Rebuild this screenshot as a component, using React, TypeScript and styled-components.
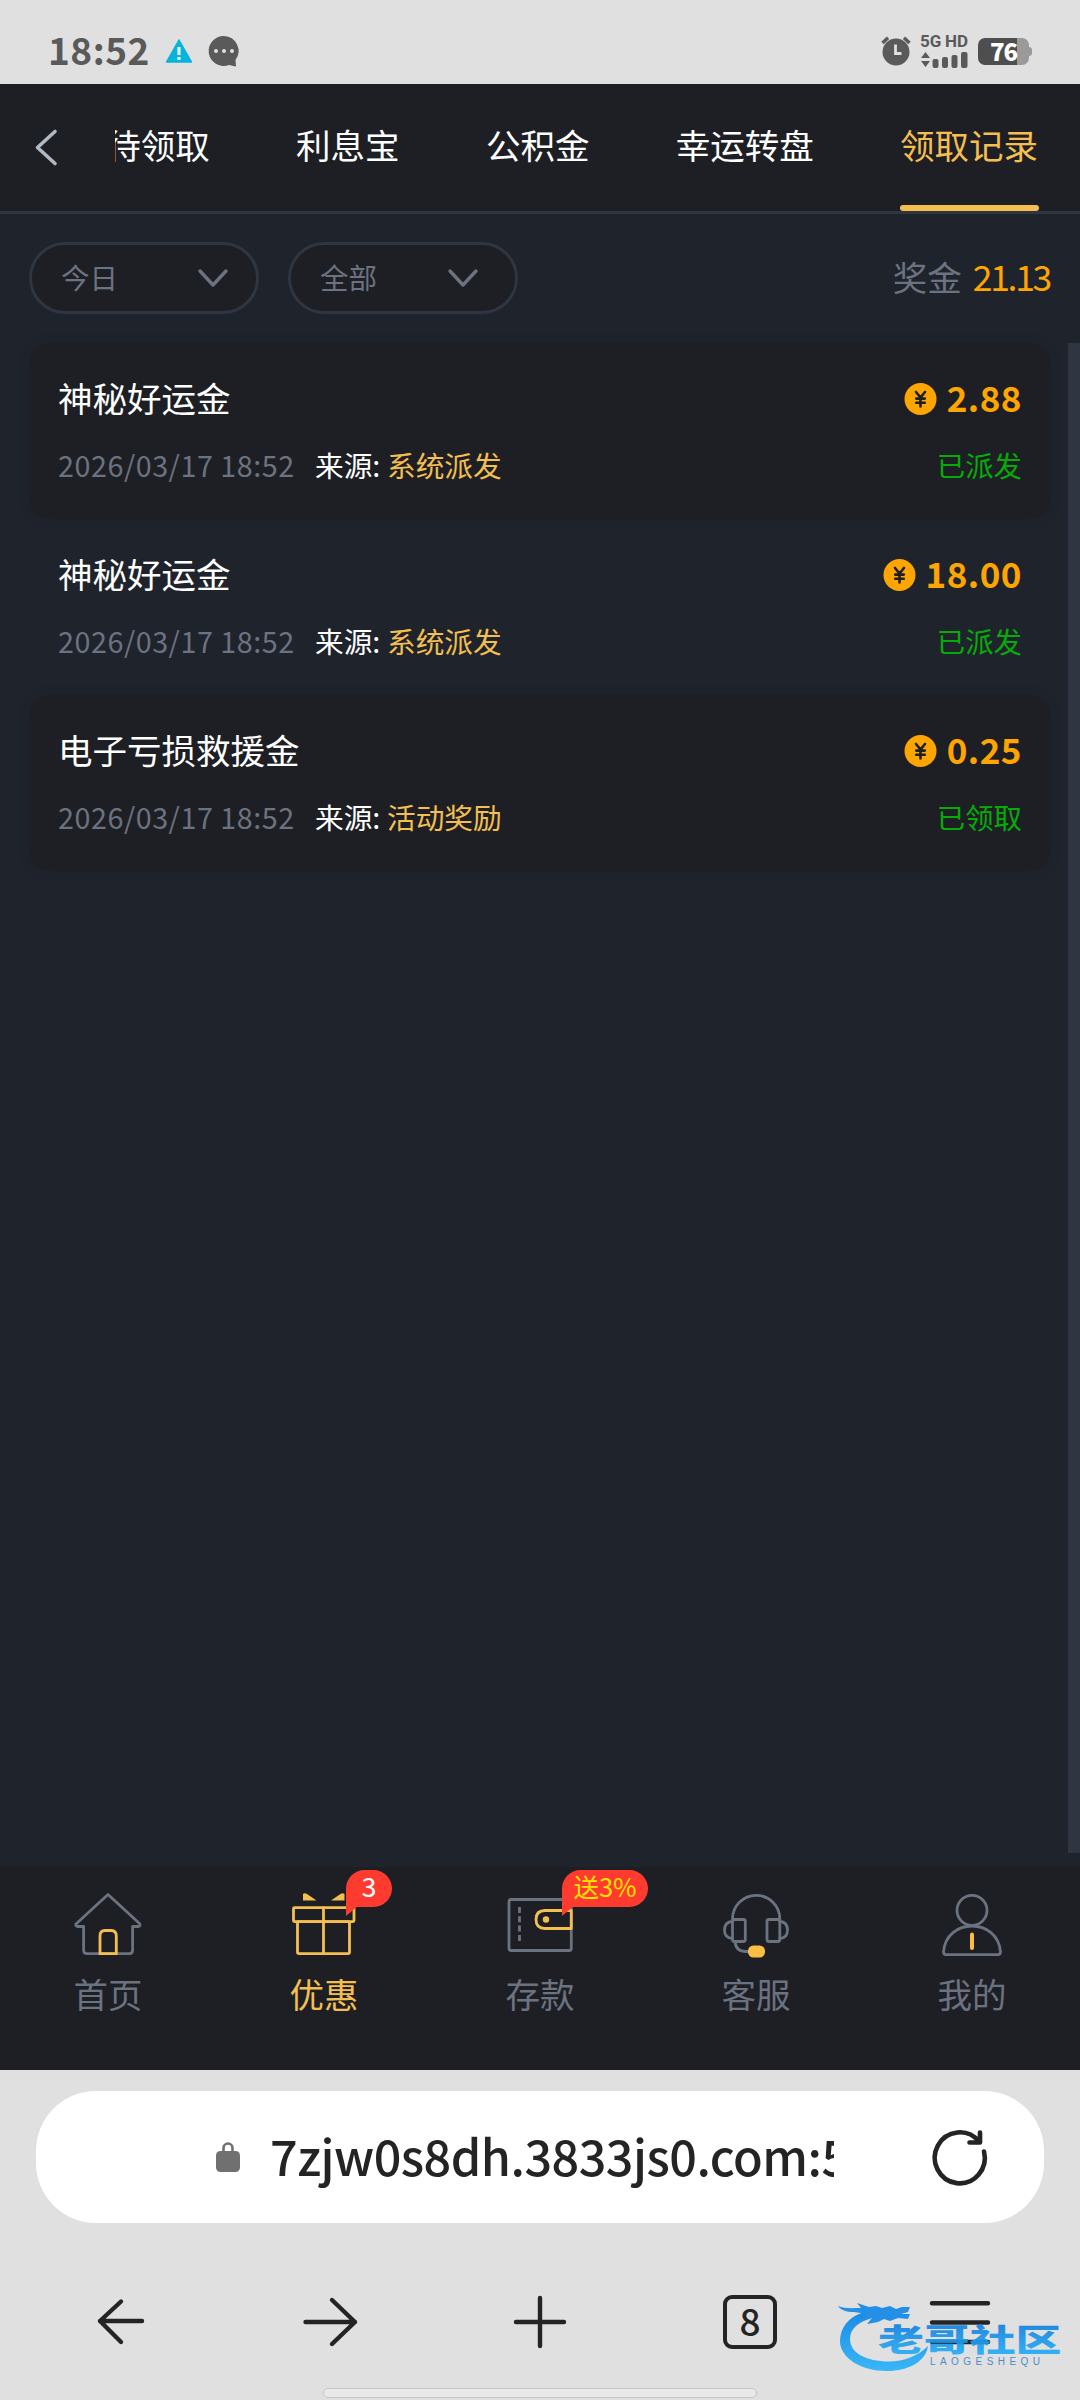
import React from 'react';
import styled, { createGlobalStyle } from 'styled-components';

const GOLD = '#f4bf50';
const MUTED = '#6b7280';
const LINE = '#2f3541';
const PANEL = '#1d1f24';
const PAGE = '#1f232c';
const INK = '#242424';
const STATUS = '#5a5a5a';

const Global = createGlobalStyle`
  * { box-sizing: border-box; }
  html, body { margin: 0; padding: 0; }
  body {
    width: 1080px;
    background: #e0e0e0;
    font-family: "Noto Sans CJK SC", "Noto Sans", sans-serif;
  }
  svg { display: block; flex: none; overflow: visible; }
`;

const Screen = styled.div`
  width: 1080px;
  height: 2400px;
  display: flex;
  flex-direction: column;
  overflow: hidden;
  background: ${PAGE};
`;

const StatusBar = styled.div`
  height: 84px;
  flex: none;
  display: flex;
  align-items: center;
  padding: 17px 51px 0 48px;
  background: #e0e0e0;
  color: ${STATUS};
`;

const Clock = styled.span`
  width: 101px;
  padding-bottom: 3px;
  font-size: 37px;
  font-weight: 700;
  line-height: 40px;
  letter-spacing: 0.5px;
  white-space: nowrap;
`;

const StatusIcon = styled.span<{ $left?: number }>`
  display: flex;
  margin-left: ${(p) => p.$left ?? 0}px;
`;

const Spacer = styled.div`
  flex: 1;
`;

const Network = styled.div`
  width: 48px;
  margin-left: 9px;
  display: flex;
  flex-direction: column;
  gap: 3px;
`;

const NetworkLabel = styled.div`
  display: flex;
  justify-content: space-between;
  height: 14px;
  font: 700 17px/14px Roboto, sans-serif;
`;

const Battery = styled.div`
  position: relative;
  width: 51px;
  height: 27px;
  margin-left: 10px;
  margin-top: 2px;
  display: flex;
  align-items: center;
  justify-content: center;
  border-radius: 7px;
  background: linear-gradient(90deg, #4e4e4e 39px, #9a9a9a 39px);
  color: #fff;
  font: 900 24px/25px "Noto Sans CJK SC", sans-serif;
  letter-spacing: -1px;
  padding-bottom: 2px;

  &::after {
    content: '';
    position: absolute;
    left: 51px;
    top: 9px;
    width: 3px;
    height: 9px;
    border-radius: 0 3px 3px 0;
    background: #9a9a9a;
  }
`;

const Header = styled.header`
  height: 130px;
  flex: none;
  display: flex;
  background: ${PANEL};
  border-bottom: 3px solid ${LINE};
`;

const Back = styled.button`
  width: 115px;
  flex: none;
  display: flex;
  align-items: center;
  padding: 0 0 0 34px;
  border: 0;
  background: none;
`;

const Tabs = styled.nav`
  flex: 1;
  min-width: 0;
  display: flex;
  justify-content: flex-end;
  gap: 86.3px;
  padding-right: 42px;
  overflow: hidden;
`;

const Tab = styled.span<{ $active?: boolean }>`
  flex: none;
  height: 127px;
  display: flex;
  flex-direction: column;
  font-size: 34.5px;
  line-height: 120px;
  white-space: nowrap;
  color: ${(p) => (p.$active ? GOLD : '#fff')};

  &::after {
    content: '';
    height: 6px;
    margin: 1px -1px 0 0;
    border-radius: 3px;
    background: ${(p) => (p.$active ? GOLD : 'transparent')};
  }
`;

const Content = styled.main`
  height: 1653px;
  flex: none;
  display: flex;
  flex-direction: column;
`;

const Filters = styled.div`
  height: 129px;
  flex: none;
  display: flex;
  align-items: center;
  gap: 29px;
  padding: 0 29px 1px;
`;

const Select = styled.div<{ $end: number }>`
  width: 230px;
  height: 72px;
  display: flex;
  align-items: center;
  justify-content: space-between;
  padding: 0 ${(p) => p.$end}px 2px 29px;
  border: 3px solid ${LINE};
  border-radius: 36px;
  background: ${PANEL};
  color: ${MUTED};
  font-size: 28.5px;
  line-height: 40px;
`;

const Bonus = styled.div`
  margin-left: auto;
  display: flex;
  align-items: center;
  gap: 11px;
  padding: 0 1px 5px 0;
  font-size: 34.5px;
  line-height: 48px;
  color: ${MUTED};
`;

const BonusValue = styled.span`
  color: #ffa500;
  font-size: 35.5px;
  letter-spacing: -2.3px;
`;

const ListArea = styled.div`
  flex: 1;
  display: flex;
  justify-content: space-between;
  padding-left: 29px;
`;

const List = styled.div`
  width: 1022px;
`;

const ScrollTrack = styled.div`
  width: 12px;
  height: 1510px;
  background: ${LINE};
`;

const Card = styled.div<{ $filled: boolean }>`
  height: 176px;
  display: flex;
  flex-direction: column;
  padding: 29px 29px 0;
  border-radius: 22px;
  background: ${(p) => (p.$filled ? PANEL : 'transparent')};
  box-shadow: ${(p) => (p.$filled ? '0 0 8px rgba(29, 31, 36, 0.5)' : 'none')};
`;

const Row = styled.div<{ $h: number; $top?: number }>`
  height: ${(p) => p.$h}px;
  margin-top: ${(p) => p.$top ?? 0}px;
  display: flex;
  align-items: center;
  justify-content: space-between;
`;

const Title = styled.span`
  font-size: 34.5px;
  line-height: 50px;
  color: #fff;
`;

const Amount = styled.span`
  display: flex;
  align-items: center;
  gap: 10px;
  font-size: 35px;
  font-weight: 700;
  line-height: 50px;
  letter-spacing: 0.5px;
  color: #ffa500;
`;

const Meta = styled.span`
  display: flex;
  font-size: 28.7px;
  line-height: 40px;
  color: ${MUTED};
`;

const Time = styled.span`
  width: 257px;
  letter-spacing: 0.55px;
  white-space: nowrap;
`;

const SourceLabel = styled.span`
  width: 72px;
  color: #fff;
`;

const Source = styled.span`
  color: ${GOLD};
`;

const State = styled.span`
  font-size: 28.4px;
  line-height: 40px;
  color: #05ac08;
`;

const BottomNav = styled.nav`
  height: 203px;
  flex: none;
  display: grid;
  grid-template-columns: repeat(5, 216px);
  background: ${PANEL};
`;

const NavItem = styled.div<{ $active?: boolean }>`
  position: relative;
  display: flex;
  flex-direction: column;
  align-items: center;
  padding-top: 22px;
  gap: 7px;
  font-size: 34.5px;
  line-height: 50px;
  color: ${(p) => (p.$active ? GOLD : MUTED)};
`;

const Badge = styled.span<{ $w: number; $size: number; $color: string }>`
  position: absolute;
  left: 130px;
  top: 3px;
  width: ${(p) => p.$w}px;
  height: 37px;
  border-radius: 19px 19px 19px 0;
  background: #ff3b30;
  color: ${(p) => p.$color};
  font-size: ${(p) => p.$size}px;
  line-height: 32px;
  text-align: center;
  white-space: nowrap;

  &::after {
    content: '';
    position: absolute;
    left: 0;
    top: 36px;
    border-top: 10px solid #ff3b30;
    border-right: 12px solid transparent;
  }
`;

const Browser = styled.footer`
  flex: 1;
  display: flex;
  flex-direction: column;
  align-items: center;
  padding-top: 21px;
  background: #e0e0e0;
`;

const Address = styled.div`
  width: 1008px;
  height: 132px;
  display: flex;
  align-items: center;
  padding: 0 56px 0 180px;
  border-radius: 60px;
  background: #fff;
`;

const Url = styled.span`
  width: 564px;
  margin: 0 98px 0 30px;
  padding-bottom: 4px;
  overflow: hidden;
  white-space: nowrap;
  color: ${INK};
  font-size: 48.5px;
  font-weight: 500;
  line-height: 72px;
  letter-spacing: -0.5px;
`;

const Toolbar = styled.div`
  position: relative;
  width: 1050px;
  height: 60px;
  margin-top: 69px;
  display: grid;
  grid-template-columns: repeat(5, 210px);
  align-items: center;
  justify-items: center;
`;

const TabCount = styled.span`
  width: 54px;
  height: 54px;
  border: 4px solid ${INK};
  border-radius: 9px;
  color: ${INK};
  font-size: 37px;
  font-weight: 500;
  line-height: 42px;
  text-align: center;
`;

const Watermark = styled.div`
  position: absolute;
  left: 821px;
  top: 8px;
  opacity: 0.92;
`;

const HomeBar = styled.div`
  width: 434px;
  height: 10px;
  margin-top: 36px;
  border: 1.5px solid #c6c6c6;
  border-radius: 5px;
  background: #e9e9e9;
`;

const Chevron = () => (
  <svg width="30" height="20" viewBox="0 0 30 20" fill="none" stroke={MUTED} strokeWidth="3.4" strokeLinecap="round" strokeLinejoin="round">
    <path d="M2 4 15 18 28 4" />
  </svg>
);

const Coin = () => (
  <svg width="33" height="33" viewBox="0 0 33 33">
    <circle cx="16.5" cy="18" r="16" fill="#ffa500" />
    <path d="M12 11 16.500 16.500 21 11M16.500 16.500V25.500M12.200 17.600H20.800M12.200 21.800H20.800" fill="none" stroke="#1d1f24" strokeWidth="2.600" strokeLinecap="round" />
  </svg>
);

const NavIcon = ({ children }: { children: React.ReactNode }) => (
  <svg width="76" height="72" viewBox="0 0 76 72" fill="none" stroke={MUTED} strokeWidth="2.8" strokeLinecap="round" strokeLinejoin="round">
    {children}
  </svg>
);

const HomeIcon = () => (
  <NavIcon>
    <path d="M13.600 37.500V61Q13.600 64.600 17 64.600H59.500Q62.600 64.600 62.600 61V37.500H68.500Q71 36.500 69.500 34.500L38 5.500 6.500 34.500Q4.500 36.500 7.500 37.500Z" />
    <path d="M30 64.600V47Q30 41.500 35 41.500H41Q46.300 41.500 46.300 47V64.600Z" stroke={GOLD} strokeLinejoin="miter" />
  </NavIcon>
);

const GiftIcon = () => (
  <NavIcon>
    <g stroke={GOLD}>
      <rect x="7.500" y="18.600" width="60.500" height="14" rx="1" />
      <rect x="11.500" y="32.600" width="52" height="32" rx="1" />
      <path d="M37.500 18.600V64.600" />
    </g>
    <path d="M17 11.500V5Q18.500 3.500 21 5L30.500 11.500ZM58.500 11.500V5Q57 3.500 54.500 5L45 11.500Z" fill={GOLD} stroke="none" />
  </NavIcon>
);

const WalletIcon = () => (
  <NavIcon>
    <rect x="7" y="10.500" width="62.300" height="51" rx="2" />
    <path d="M17.500 18V52" strokeDasharray="6 3.300" strokeLinecap="butt" />
    <path d="M69.300 21.500H43Q34 21.500 34 30.500T43 39.500H69.300Z" stroke={GOLD} />
    <circle cx="44" cy="30.500" r="3.200" fill={GOLD} stroke="none" />
  </NavIcon>
);

const HeadsetIcon = () => (
  <NavIcon>
    <path d="M14.500 31V30A23.650 23.650 0 0 1 61.800 30V31" />
    <rect x="14.500" y="30.500" width="12.800" height="22" rx="2" />
    <rect x="49" y="30.500" width="12.800" height="22" rx="2" />
    <path d="M14.500 32.500Q6.500 33 6.500 41T14.500 49.500M61.800 32.500Q69.500 33 69.500 41T61.800 49.500" />
    <path d="M17 53Q18 62.500 28 62.500H32" />
    <rect x="30" y="56.500" width="17" height="12" rx="5.500" fill="#fbbd42" stroke="none" />
  </NavIcon>
);

const UserIcon = () => (
  <NavIcon>
    <circle cx="38" cy="21.300" r="15" />
    <path d="M9.500 62.500C11 46 24 37 38 37S65 46 66.500 62.500Q66.500 65.600 64 65.600H12Q9.500 65.600 9.500 62.500Z" />
    <path d="M38 45.500V59" stroke="#fbbd42" strokeWidth="4" />
  </NavIcon>
);

const AlarmIcon = () => (
  <svg width="30" height="30" viewBox="0 0 30 30" fill="none">
    <circle cx="15" cy="16" r="13.500" fill={STATUS} />
    <path d="M1.500 7 7 1.700M28.500 7 23 1.700" stroke={STATUS} strokeWidth="3.400" />
    <path d="M14.500 8.500V17.500H20.500" stroke="#e0e0e0" strokeWidth="2.800" />
  </svg>
);

const SignalIcon = () => (
  <svg width="48" height="17" viewBox="0 0 48 17" fill={STATUS}>
    <path d="M1 7 5.500 1 10 7ZM1 10H10L5.500 16Z" />
    <rect x="12.500" y="8" width="6" height="9" rx="2" />
    <rect x="22" y="6" width="6" height="11" rx="2" />
    <rect x="31.500" y="4" width="6" height="13" rx="2" />
    <rect x="41" y="1" width="6.500" height="16" rx="2" />
  </svg>
);

const Dragon = () => (
  <svg width="230" height="78" viewBox="0 0 230 78">
    <defs>
      <linearGradient id="wave" x1="0" y1="0" x2="0" y2="1">
        <stop offset="0" stopColor="#0b84e8" />
        <stop offset="1" stopColor="#2bb4f8" />
      </linearGradient>
      <linearGradient id="ink" gradientUnits="userSpaceOnUse" x1="0" y1="-25" x2="0" y2="3">
        <stop offset="0" stopColor="#1583e2" />
        <stop offset="1" stopColor="#25adf5" />
      </linearGradient>
    </defs>
    <path d="M28 12C12 17 4 28 4 41C4 58 25 71 51 71C73 71 90 61 92 46C82 56 68 61.500 53 61.500C30 61.500 14 53 14 39C14 29 22 22 36 18Z" fill="url(#wave)" />
    <path d="M2 6C9 9 16 8 25 8L21 3 33 7 40 6 46 8 54 6 60 9 66 7 74 7 72 12 65 14 74 14 72 19 62 18 54 21 48 19 42 22 31 24 36 18 25 20 31 14 18 12C10 12 5 10 2 6Z" fill="#1389e8" />
    <text transform="translate(42 51) scale(1.480 1)" fontFamily="Noto Sans CJK SC, sans-serif" fontSize="31" fontWeight="900" fill="url(#ink)">
      老哥社区
    </text>
    <text x="94" y="64.500" fontFamily="Liberation Sans, sans-serif" fontSize="10" textLength="110" fill="#3f87c6">
      LAOGESHEQU
    </text>
  </svg>
);

const tabs = ['待领取', '利息宝', '公积金', '幸运转盘', '领取记录'];

const records = [
  { title: '神秘好运金', amount: '2.88', time: '2026/03/17 18:52', source: '系统派发', state: '已派发' },
  { title: '神秘好运金', amount: '18.00', time: '2026/03/17 18:52', source: '系统派发', state: '已派发' },
  { title: '电子亏损救援金', amount: '0.25', time: '2026/03/17 18:52', source: '活动奖励', state: '已领取' },
];

export default function App() {
  return (
    <>
      <Global />
      <Screen>
        <StatusBar>
          <Clock>18:52</Clock>
          <StatusIcon $left={16}>
            <svg width="28" height="26" viewBox="0 0 28 26">
              <path d="M14 2 26.500 24H1.500Z" fill="#06b4dc" stroke="#06b4dc" strokeWidth="1.500" strokeLinejoin="round" />
              <path d="M14 9V17M14 19V22" stroke="#e8f6fa" strokeWidth="3.200" />
            </svg>
          </StatusIcon>
          <StatusIcon $left={16}>
            <svg width="30" height="32" viewBox="0 0 30 32">
              <path d="M15 1A15 15 0 1 0 20 30L27 31.500 26.500 25A15 15 0 0 0 15 1Z" fill={STATUS} />
              <g fill="#e0e0e0">
                <circle cx="7" cy="16" r="2" />
                <circle cx="15" cy="16" r="2" />
                <circle cx="23" cy="16" r="2" />
              </g>
            </svg>
          </StatusIcon>
          <Spacer />
          <StatusIcon>
            <AlarmIcon />
          </StatusIcon>
          <Network>
            <NetworkLabel>
              <span>5G</span>
              <span>HD</span>
            </NetworkLabel>
            <SignalIcon />
          </Network>
          <Battery>76</Battery>
        </StatusBar>

        <Header>
          <Back aria-label="返回">
            <svg width="24" height="38" viewBox="0 0 24 38" fill="none" stroke="#b0b8c4" strokeWidth="3.600" strokeLinecap="round" strokeLinejoin="round">
              <path d="M21 2.500 3.500 18.500 21 34.500" />
            </svg>
          </Back>
          <Tabs>
            {tabs.map((t) => (
              <Tab key={t} $active={t === '领取记录'}>
                {t}
              </Tab>
            ))}
          </Tabs>
        </Header>

        <Content>
          <Filters>
            <Select $end={28}>
              今日
              <Chevron />
            </Select>
            <Select $end={37}>
              全部
              <Chevron />
            </Select>
            <Bonus>
              奖金
              <BonusValue>21.13</BonusValue>
            </Bonus>
          </Filters>
          <ListArea>
            <List>
              {records.map((r, i) => (
                <Card key={i} $filled={i % 2 === 0}>
                  <Row $h={50}>
                    <Title>{r.title}</Title>
                    <Amount>
                      <Coin />
                      {r.amount}
                    </Amount>
                  </Row>
                  <Row $h={40} $top={23}>
                    <Meta>
                      <Time>{r.time}</Time>
                      <SourceLabel>来源:</SourceLabel>
                      <Source>{r.source}</Source>
                    </Meta>
                    <State>{r.state}</State>
                  </Row>
                </Card>
              ))}
            </List>
            <ScrollTrack />
          </ListArea>
        </Content>

        <BottomNav>
          <NavItem>
            <HomeIcon />
            首页
          </NavItem>
          <NavItem $active>
            <GiftIcon />
            优惠
            <Badge $w={46} $size={27} $color="#fff">
              3
            </Badge>
          </NavItem>
          <NavItem>
            <WalletIcon />
            存款
            <Badge $w={86} $size={25.5} $color="#ffe600">
              送3%
            </Badge>
          </NavItem>
          <NavItem>
            <HeadsetIcon />
            客服
          </NavItem>
          <NavItem>
            <UserIcon />
            我的
          </NavItem>
        </BottomNav>

        <Browser>
          <Address>
            <svg width="24" height="32" viewBox="0 0 24 32">
              <rect x="0" y="10" width="24" height="21" rx="4.500" fill="#707070" />
              <path d="M7.500 12V7A4.500 4.500 0 0 1 16.500 7V12" fill="none" stroke="#707070" strokeWidth="2.600" />
            </svg>
            <Url>7zjw0s8dh.3833js0.com:5</Url>
            <svg width="56" height="56" viewBox="0 0 56 56" fill="none" stroke={INK} strokeWidth="4.600" strokeLinecap="round" strokeLinejoin="round">
              <path d="M52 22.500A25 25.500 0 1 1 47 12.500" />
              <path d="M48 3.500V13.500H37.500" />
            </svg>
          </Address>
          <Toolbar>
            <svg width="54" height="54" viewBox="0 0 54 54" fill="none" stroke={INK} strokeWidth="4.400" strokeLinecap="round" strokeLinejoin="round">
              <path d="M49 26H7M28 6.500 7 26 28 47" />
            </svg>
            <svg width="54" height="54" viewBox="0 0 54 54" fill="none" stroke={INK} strokeWidth="4.400" strokeLinecap="round" strokeLinejoin="round">
              <path d="M2.500 27H52M29 5 52 27 29 49" />
            </svg>
            <svg width="54" height="54" viewBox="0 0 54 54" fill="none" stroke={INK} strokeWidth="4.400" strokeLinecap="round">
              <path d="M3 27H51M27 3V51" />
            </svg>
            <TabCount>8</TabCount>
            <svg width="60" height="54" viewBox="0 0 60 54" fill="none" stroke={INK} strokeWidth="4.400" strokeLinecap="round">
              <path d="M2 8.200H58M2 27.500H58M2 47H58" />
            </svg>
            <Watermark>
              <Dragon />
            </Watermark>
          </Toolbar>
          <HomeBar />
        </Browser>
      </Screen>
    </>
  );
}
